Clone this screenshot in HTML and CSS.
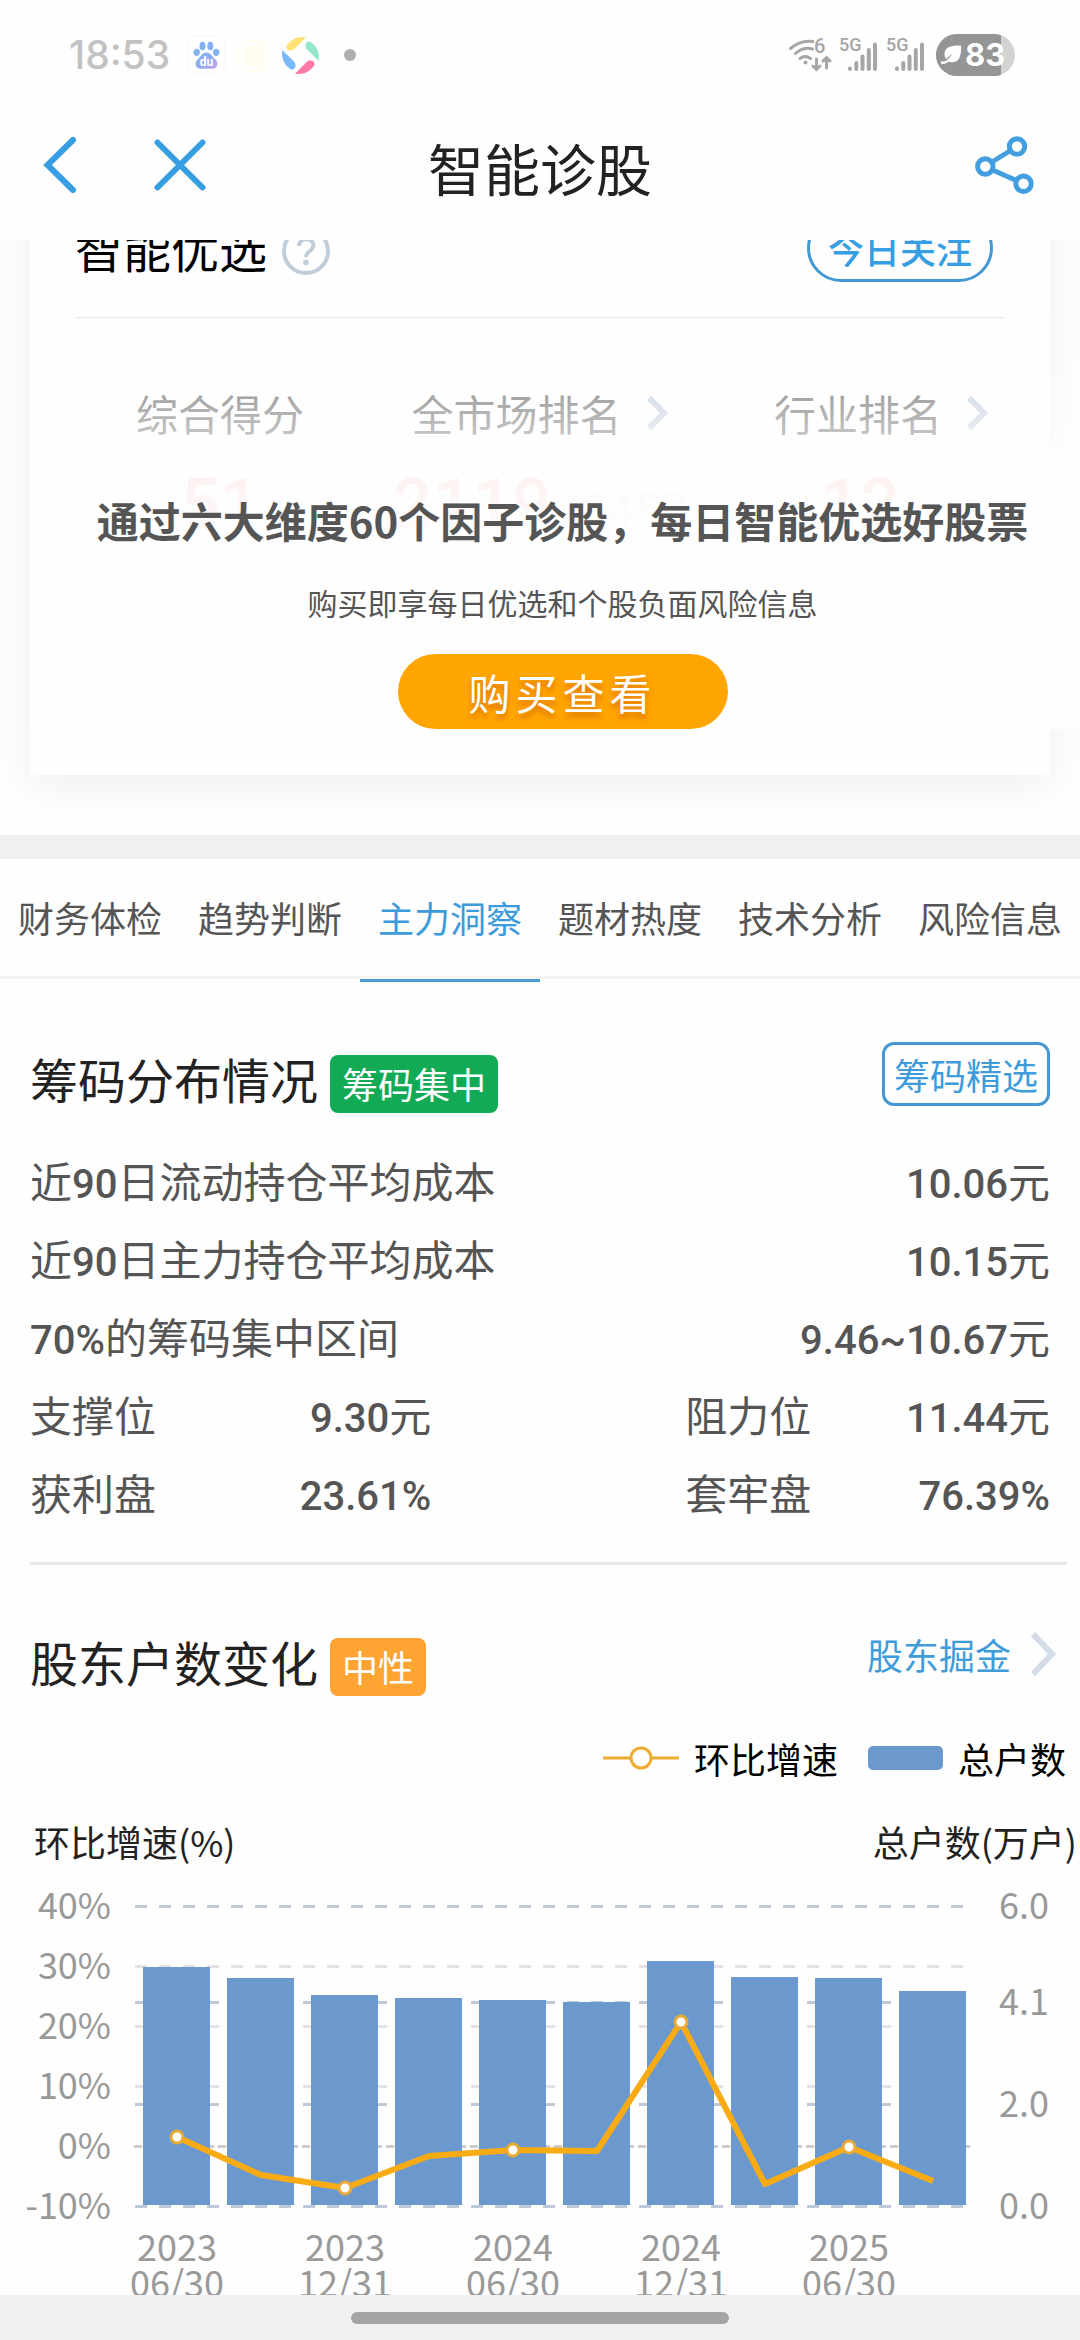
FILE: index.html
```html
<!DOCTYPE html>
<html lang="zh-CN">
<head>
<meta charset="utf-8">
<meta name="viewport" content="width=device-width, initial-scale=1">
<title>智能诊股</title>
<link rel="stylesheet" href="styles.css">
</head>
<body>
<div class="app">
  <header class="top">
    <div class="status">
      <span class="time">18:53</span>
      <svg class="notices" width="170" height="42" viewBox="186 34 170 42" aria-hidden="true">
        <defs>
          <linearGradient id="paw" x1="0" y1="0" x2="1" y2="1">
            <stop offset="0" stop-color="#84b8f6"/><stop offset=".6" stop-color="#93a8f0"/><stop offset="1" stop-color="#d0a0ee"/>
          </linearGradient>
        </defs>
        <rect x="188" y="36.500" width="37" height="37" rx="8" fill="#fff" stroke="#f7f7f9"/>
        <g fill="#86b2f4">
          <ellipse cx="202.500" cy="46" rx="3" ry="4.200"/>
          <ellipse cx="210.300" cy="46" rx="3" ry="4.200"/>
          <ellipse cx="196.700" cy="52.300" rx="3.200" ry="3.600"/>
          <ellipse cx="216.200" cy="52.300" rx="3.200" ry="3.600"/>
        </g>
        <path d="M206.500 52.500c4.500 0 5.500 4 8.500 6.500 4 3.500 3 9.700-3 9.700h-11c-6 0-7-6.200-3-9.700 3-2.500 4-6.500 8.500-6.500z" fill="url(#paw)"/>
        <text x="206.500" y="66" class="du">du</text>
        <circle cx="254" cy="56" r="16" fill="#fffefb" stroke="#fffdf0" stroke-width="2"/>
        <rect x="245" y="46" width="20" height="20" rx="4" fill="#fffdf0"/>
        <g transform="translate(300.500 55.500)">
          <path d="M5.500-18.300A19 19 0 0 0-13.500-10.500C-16-6-10-3-6-6.500Z" fill="#ffe174"/>
          <path d="M5.500-18.300A19 19 0 0 0-13.500-10.500C-16-6-10-3-6-6.500Z" fill="#93e7cc" transform="rotate(90)"/>
          <path d="M5.500-18.300A19 19 0 0 0-13.500-10.500C-16-6-10-3-6-6.500Z" fill="#ff7ba6" transform="rotate(180)"/>
          <path d="M5.500-18.300A19 19 0 0 0-13.500-10.500C-16-6-10-3-6-6.500Z" fill="#7bb9ff" transform="rotate(270)"/>
        </g>
        <circle cx="350" cy="55" r="6" fill="#aeaeae"/>
      </svg>
      <svg class="signals" width="228" height="42" viewBox="788 34 228 42" aria-hidden="true">
        <g fill="none" stroke="#a6a6a6" stroke-width="3" stroke-linecap="round">
          <path d="M790.500 48.500Q801 39.500 813 41.500"/>
          <path d="M795.500 53.500Q803 46.500 812.500 49"/>
          <path d="M800 58.500Q805 54.500 810.500 58.500"/>
          <path d="M816.500 59v10.500m-3.500-3.500 3.500 3.500 3.500-3.500M826.500 68V57.500m-3.500 3.500 3.500-3.500 3.500 3.500"/>
        </g>
        <circle cx="805.500" cy="62.500" r="2" fill="#a6a6a6"/>
        <text x="814" y="53" class="net six">6</text>
        <text x="839" y="51" class="net">5G</text>
        <text x="886" y="51" class="net">5G</text>
        <g stroke="#a6a6a6" stroke-width="4" stroke-linecap="round">
          <path d="M850 68.500v.5M856.300 63v6M862.500 56.500v12.500M868.800 50v19M875 44.500V69"/>
          <path d="M897 68.500v.5M903.300 63v6M909.500 56.500v12.500M915.800 50v19M922 44.500V69"/>
        </g>
        <clipPath id="cell"><rect x="936" y="34" width="79" height="42" rx="21"/></clipPath>
        <g clip-path="url(#cell)">
          <rect x="936" y="34" width="79" height="42" fill="#d3d3d3"/>
          <rect x="936" y="34" width="65" height="42" fill="#959595"/>
        </g>
        <path d="M961 45.500c-9-.5-16 1-16.500 8-.1 2 .5 4 1.500 5.500l7-6-6 8c9 4 15-1 14-15.500z" fill="#fff"/>
        <path d="M942 62.500q4 1 9-4.500" fill="none" stroke="#fff" stroke-width="2.500" stroke-linecap="round"/>
        <text x="965" y="66" class="level">83</text>
      </svg>
    </div>
    <div class="navbar">
      <button class="icon-btn back" type="button" aria-label="返回">
        <svg width="34" height="60" viewBox="43 135 34 60"><path d="M73 140 47.500 165 73 190" fill="none" stroke="#389ee3" stroke-width="6" stroke-linecap="round"/></svg>
      </button>
      <button class="icon-btn" type="button" aria-label="关闭">
        <svg width="54" height="60" viewBox="153 135 54 60"><path d="m157.500 142.500 45 45m0-45-45 45" fill="none" stroke="#389ee3" stroke-width="6" stroke-linecap="round"/></svg>
      </button>
      <h1>智能诊股</h1>
      <button class="icon-btn share" type="button" aria-label="分享">
        <svg width="62" height="62" viewBox="973 133 62 62"><g fill="none" stroke="#429edf" stroke-width="5"><circle cx="1017" cy="145.500" r="7.700"/><circle cx="985.300" cy="165.500" r="7.700"/><circle cx="1023.500" cy="182.700" r="7.700"/><path d="m992 161 18.500-11.500M992.500 169l24 10.500"/></g></svg>
      </button>
    </div>
  </header>

  <main class="content">
    <section class="card">
      <div class="card-head">
        <h2>智能优选</h2>
        <button class="icon-btn help" type="button" aria-label="说明">
          <svg width="48" height="48" viewBox="0 0 48 48"><circle cx="24" cy="24" r="22" fill="none" stroke="#c0cddb" stroke-width="4"/><path d="M17 19c0-9 14.500-9 14.500-.5C31.500 24 24 24 24 30" fill="none" stroke="#c0cddb" stroke-width="4"/><circle cx="24" cy="35.500" r="2.800" fill="#c0cddb"/></svg>
        </button>
        <button class="pill" type="button">今日关注</button>
      </div>
      <div class="scores">
        <div class="score">
          <div class="label">综合得分</div>
          <div class="figure">51</div>
        </div>
        <div class="score">
          <a class="label" href="#market">全市场排名<svg width="22" height="34" viewBox="0 0 22 34"><path d="m2 2 15 15L2 32" fill="none" stroke="#b9c8d8" stroke-width="6"/></svg></a>
          <div class="figure">2119<small>/5457</small></div>
        </div>
        <div class="score last">
          <a class="label" href="#industry">行业排名<svg width="22" height="34" viewBox="0 0 22 34"><path d="m2 2 15 15L2 32" fill="none" stroke="#b9c8d8" stroke-width="6"/></svg></a>
          <div class="figure">12</div>
        </div>
      </div>
      <div class="paywall">
        <p class="pitch">通过六大维度60个因子诊股，每日智能优选好股票</p>
        <p class="note">购买即享每日优选和个股负面风险信息</p>
        <button class="buy" type="button">购买查看</button>
      </div>
    </section>

    <nav class="tabs">
      <a href="#finance">财务体检</a>
      <a href="#trend">趋势判断</a>
      <a href="#main" class="active" aria-current="page">主力洞察</a>
      <a href="#theme">题材热度</a>
      <a href="#tech">技术分析</a>
      <a href="#risk">风险信息</a>
    </nav>

    <section class="panel">
      <div class="panel-head">
        <div class="heading"><h2>筹码分布情况</h2><span class="badge green">筹码集中</span></div>
        <button class="outline" type="button">筹码精选</button>
      </div>
      <dl class="rows">
        <div class="row"><dt>近<b>90</b>日流动持仓平均成本</dt><dd><b>10.06</b>元</dd></div>
        <div class="row"><dt>近<b>90</b>日主力持仓平均成本</dt><dd><b>10.15</b>元</dd></div>
        <div class="row"><dt><b>70%</b>的筹码集中区间</dt><dd><b>9.46~10.67</b>元</dd></div>
        <div class="pair">
          <div class="row"><dt>支撑位</dt><dd><b>9.30</b>元</dd></div>
          <div class="row"><dt>阻力位</dt><dd><b>11.44</b>元</dd></div>
          <div class="row"><dt>获利盘</dt><dd><b>23.61%</b></dd></div>
          <div class="row"><dt>套牢盘</dt><dd><b>76.39%</b></dd></div>
        </div>
      </dl>
      <hr>
    </section>

    <section class="panel holders">
      <div class="panel-head">
        <div class="heading"><h2>股东户数变化</h2><span class="badge orange">中性</span></div>
        <a class="more" href="#holders">股东掘金<svg width="26" height="44" viewBox="0 0 26 44"><path d="m2 2 19 20L2 42" fill="none" stroke="#d4dde7" stroke-width="6"/></svg></a>
      </div>
    </section>
    <div class="legend">
      <span class="key"><svg width="76" height="24" viewBox="0 0 76 24"><path d="M0 12h27m22 0h27" stroke="#ecad30" stroke-width="3"/><circle cx="38" cy="12" r="10" fill="#fff" stroke="#ecad30" stroke-width="3"/></svg>环比增速</span>
      <span class="key"><i class="swatch"></i>总户数</span>
    </div>
    <div class="axis-names"><span>环比增速(%)</span><span>总户数(万户)</span></div>
    <svg class="chart" viewBox="0 1859 1080 481" role="img" aria-label="股东户数与环比增速">
      <g class="grid-left">
        <path d="M135 1966.500H975M135 2026.500H975M135 2086.500H975"/>
      </g>
      <path class="zero" d="M135 2146.500H970"/>
      <g class="grid-right">
        <path d="M135 1906.500H975M135 2002.500H975M135 2104.500H975M135 2206.500H975"/>
      </g>
      <g class="bars">
        <rect x="143" y="1967" width="67" height="238"/>
        <rect x="227" y="1978" width="67" height="227"/>
        <rect x="311" y="1995" width="67" height="210"/>
        <rect x="395" y="1998" width="67" height="207"/>
        <rect x="479" y="2000" width="67" height="205"/>
        <rect x="563" y="2002" width="67" height="203"/>
        <rect x="647" y="1961" width="67" height="244"/>
        <rect x="731" y="1977" width="67" height="228"/>
        <rect x="815" y="1978" width="67" height="227"/>
        <rect x="899" y="1991" width="67" height="214"/>
      </g>
      <polyline class="growth" points="177,2137 261,2175 345,2188 429,2156 513,2150 597,2151 681,2022 765,2184 849,2147 933,2181"/>
      <g class="dots">
        <circle cx="177" cy="2137" r="6"/><circle cx="345" cy="2188" r="6"/><circle cx="513" cy="2150" r="6"/><circle cx="681" cy="2022" r="6"/><circle cx="849" cy="2147" r="6"/>
      </g>
      <g class="tick end">
        <text x="111" y="1919">40%</text><text x="111" y="1979">30%</text><text x="111" y="2039">20%</text><text x="111" y="2099">10%</text><text x="111" y="2159">0%</text><text x="111" y="2219">-10%</text>
      </g>
      <g class="tick">
        <text x="999" y="1919">6.0</text><text x="999" y="2015">4.1</text><text x="999" y="2117">2.0</text><text x="999" y="2219">0.0</text>
      </g>
      <g class="tick mid">
        <text x="177" y="2261">2023</text><text x="177" y="2297">06/30</text>
        <text x="345" y="2261">2023</text><text x="345" y="2297">12/31</text>
        <text x="513" y="2261">2024</text><text x="513" y="2297">06/30</text>
        <text x="681" y="2261">2024</text><text x="681" y="2297">12/31</text>
        <text x="849" y="2261">2025</text><text x="849" y="2297">06/30</text>
      </g>
    </svg>
  </main>

  <footer class="gesture"><span></span></footer>
</div>
</body>
</html>
```
FILE: styles.css
```css
* { box-sizing: border-box; }

body {
  margin: 0;
  background: #fefefe;
  color: #222;
  font-family: "Noto Sans CJK SC", "Noto Sans", sans-serif;
  font-size: 36px;
}

h1, h2, p, dl, dd { margin: 0; font-weight: 400; }
a { color: inherit; text-decoration: none; }
button { font: inherit; cursor: pointer; }
svg { display: block; flex: none; }

.app {
  display: flex;
  flex-direction: column;
  height: 100vh;
}

/* Status bar and navigation */
.top { flex: none; background: #fefefe; }

.status {
  display: flex;
  align-items: center;
  height: 110px;
  padding: 0 64px 0 69px;
}
.time {
  width: 117px;
  color: #c2c2c2;
  font: 500 39px/40px Inter, sans-serif;
}
.signals { margin-left: auto; }
.du { fill: #fff; font: 700 12px Roboto, sans-serif; text-anchor: middle; }
.net { fill: #a6a6a6; font: 500 18px Roboto, sans-serif; }
.six { font-size: 20px; }
.level { fill: #fff; font: 700 31px Inter, sans-serif; }

.navbar {
  position: relative;
  display: flex;
  align-items: center;
  gap: 76px;
  height: 110px;
  margin-bottom: 20px;
  padding: 0 45px 0 43px;
}
.navbar h1 {
  position: absolute;
  left: 50%;
  transform: translateX(-50%);
  font-size: 56px;
  line-height: 110px;
  padding-top: 4px;
}
.icon-btn { padding: 0; border: 0; background: none; }
.share { margin-left: auto; }

.content { flex: 1; min-height: 0; overflow: hidden; }

/* Score card */
.card {
  position: relative;
  height: 591px;
  margin: -56px 30px 60px;
  padding: 0 45px;
  background: #fefefe;
  box-shadow: 0 6px 44px rgba(0, 0, 0, .07);
}
.card-head {
  display: flex;
  align-items: center;
  height: 134px;
  border-bottom: 1px solid #e8e8e8;
}
.card-head h2 { padding-bottom: 8px; color: #000; font-size: 48px; }
.help { margin-left: 15px; }
.pill {
  height: 68px;
  margin: 0 12px 6px auto;
  padding: 0 18px;
  border: 3px solid #4598d3;
  border-radius: 34px;
  background: none;
  color: #389ee3;
  font-weight: 500;
  line-height: 56px;
}

.scores {
  display: grid;
  grid-template-columns: 29fr 35fr 29fr;
  padding-top: 65px;
}
.label {
  display: flex;
  align-items: center;
  justify-content: center;
  gap: 25px;
  color: #555;
  font-size: 42px;
  line-height: 60px;
}
.last .label { justify-content: flex-end; padding-right: 16px; }
.figure {
  padding-top: 21px;
  color: #f23030;
  font: 500 70px/80px Roboto, sans-serif;
  text-align: center;
}
.figure small { margin-left: 8px; color: #bbb; font-size: 48px; font-weight: 400; }

/* Fades the scores out behind the purchase prompt */
.paywall {
  position: absolute;
  top: 116px;
  right: -30px;
  left: 0;
  display: flex;
  flex-direction: column;
  align-items: center;
  height: 429px;
  padding: 192px 0 0 15px;
  background: linear-gradient(rgba(254, 254, 254, 0), rgba(254, 254, 254, .66) 135px, rgba(254, 254, 254, .94) 176px, rgba(254, 254, 254, .96) 210px, #fefefe 250px);
  color: #555;
  white-space: nowrap;
}
.pitch { font-size: 42px; font-weight: 700; line-height: 56px; }
.note { margin-top: 32px; font-size: 30px; line-height: 44px; }
.buy {
  width: 330px;
  height: 75px;
  margin-top: 30px;
  padding: 0;
  border: 0;
  border-radius: 38px;
  background: #ffa500;
  color: #fff;
  font-size: 42px;
  line-height: 72px;
  letter-spacing: 5px;
  text-shadow: 0 5px 5px rgba(190, 70, 20, .5);
}

/* Tabs */
.tabs {
  display: grid;
  grid-template-columns: repeat(6, 1fr);
  margin-bottom: 3px;
  border-top: 24px solid #f0f0f0;
  border-bottom: 3px solid #f4f4f4;
  color: #555;
  line-height: 117px;
  text-align: center;
}
.active { position: relative; color: #3b9bdb; }
.active::after {
  position: absolute;
  right: 0;
  bottom: -6px;
  left: 0;
  height: 3px;
  background: #4a9bd2;
  content: "";
}

/* Panels */
.panel { padding: 60px 30px 0; }
.panel-head {
  display: flex;
  align-items: flex-start;
  justify-content: space-between;
}
.heading { display: flex; gap: 12px; padding-top: 13px; }
.heading h2 { font-size: 48px; line-height: 46px; }
.badge {
  padding: 0 12px;
  border-radius: 8px;
  color: #fff;
  line-height: 56px;
  height: 58px;
}
.green { background: #13aa55; }
.orange { background: #fea433; }
.outline {
  height: 64px;
  padding: 0 9px;
  border: 3px solid #4598d3;
  border-radius: 12px;
  background: none;
  color: #3f9cda;
  line-height: 56px;
}

.rows {
  padding: 28px 0 31px;
  color: #555;
  font-size: 42px;
  line-height: 78px;
}
.row { display: flex; justify-content: space-between; }
.pair { display: grid; grid-template-columns: 11fr 10fr; column-gap: 254px; }
.rows b { font-family: Roboto, sans-serif; font-size: 40px; font-weight: 500; line-height: 1; }
hr { margin: 0 -17px 0 0; border: 0; border-top: 3px solid #e8e8e8; }

.holders { padding-right: 23px; }
.more { display: flex; align-items: center; gap: 20px; color: #3f9cda; line-height: 58px; }

/* Chart */
.legend {
  display: flex;
  justify-content: flex-end;
  gap: 30px;
  padding: 44px 14px 47px 0;
  color: #000;
  line-height: 36px;
}
.key { display: flex; align-items: center; gap: 15px; }
.swatch { width: 75px; height: 24px; border-radius: 5px; background: #6c99cd; }
.axis-names {
  display: flex;
  justify-content: space-between;
  padding: 0 3px 0 34px;
  line-height: 36px;
}
.chart { width: 100%; height: auto; }
.grid-left, .grid-right, .zero { fill: none; stroke-width: 3; stroke-dasharray: 12 12; }
.grid-left { stroke: #e3e3e3; }
.grid-right { stroke: #bdc9d6; }
.zero { stroke: #ccc; stroke-dasharray: 6 6; stroke-linecap: round; }
.bars { fill: #6c99cd; }
.growth { fill: none; stroke: #f9ab14; stroke-width: 6; stroke-linejoin: round; }
.dots { fill: #fff; stroke: #e9ab35; stroke-width: 3; }
.tick { fill: #999; font-size: 36px; }
.end { text-anchor: end; }
.mid { text-anchor: middle; }

/* Gesture bar */
.gesture {
  display: flex;
  flex: none;
  justify-content: center;
  height: 45px;
  padding-top: 17px;
  background: #f0f0f2;
}
.gesture span { width: 35%; height: 12px; border-radius: 6px; background: #a5a5a7; }
```
